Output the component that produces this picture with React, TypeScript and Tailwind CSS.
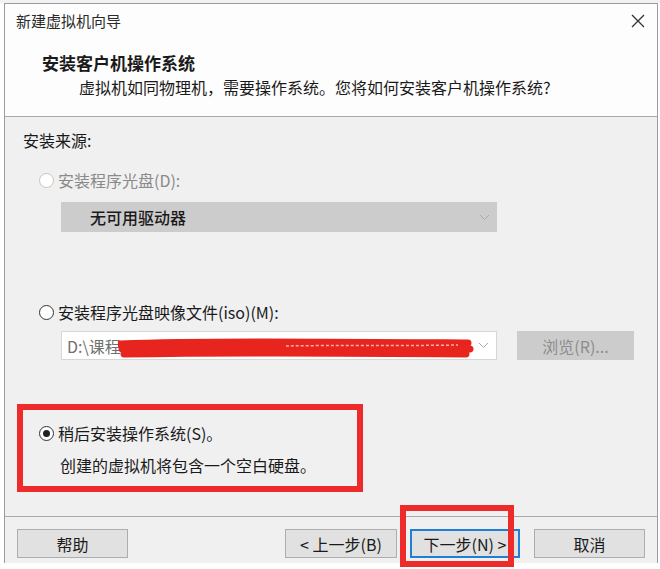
import React from 'react';

const FONT = "font-['Noto_Sans_CJK_SC','Microsoft_YaHei',sans-serif]";

function Radio({ checked, disabled }: { checked?: boolean; disabled?: boolean }) {
  return (
    <span
      className={`flex h-[15px] w-[15px] shrink-0 items-center justify-center rounded-full border bg-white ${
        disabled ? 'border-[#c4c4c4]' : 'border-[#333333]'
      }`}
    >
      {checked && <span className="h-[7px] w-[7px] rounded-full bg-[#222222]" />}
    </span>
  );
}

function Chevron() {
  return (
    <svg width="11" height="7" viewBox="0 0 11 7" className="shrink-0">
      <polyline points="1,1 5.5,5.5 10,1" fill="none" stroke="#a8a8a8" strokeWidth="1" />
    </svg>
  );
}

function Button({ label, focused, wide }: { label: string; focused?: boolean; wide?: boolean }) {
  return (
    <div
      className={`flex h-[29px] items-center justify-center bg-[#e1e1e1] text-[16px] leading-[20px] text-[#1a1a1a] ${
        focused
          ? 'w-[110px] border-2 border-[#1f7fd6]'
          : `${wide ? 'w-[112px]' : 'w-[111px]'} border border-[#adadad]`
      }`}
    >
      {label}
    </div>
  );
}

export default function App() {
  return (
    <div className={`relative flex h-[569px] w-[660px] flex-col overflow-hidden bg-white ${FONT}`}>
      {/* strip above the window */}
      <div className="h-[3px] bg-[#f2f2f2]" />

      {/* Window */}
      <div className="ml-[4px] flex h-[560px] w-[654px] flex-col border-l border-t border-r border-[#9c9c9c] bg-[#f0f0f1]">
        {/* Header */}
        <div className="h-[113px] border-b border-[#a9a9a9] bg-[#fdfdfd]">
          <div className="flex items-center justify-between pl-[11px] pr-[12px] pt-[7px]">
            <span className="text-[15px] leading-[20px] text-[#2a2a2a]">新建虚拟机向导</span>
            <svg width="14" height="14" viewBox="0 0 14 14">
              <path d="M1 1 L13 13 M13 1 L1 13" stroke="#333333" strokeWidth="1.3" />
            </svg>
          </div>
          <div className="mt-[20px] pl-[37px] text-[17px] font-bold leading-[24px] text-[#1a1a1a]">
            安装客户机操作系统
          </div>
          <div className="mt-[2px] pl-[74px] text-[16px] leading-[20px] text-[#1a1a1a]">
            虚拟机如同物理机，需要操作系统。您将如何安装客户机操作系统?
          </div>
        </div>

        {/* Body */}
        <div className="flex h-[399px] flex-col">
          <div className="pl-[18px] pt-[13px] text-[16px] leading-[20px] text-[#1a1a1a]">安装来源:</div>

          <div className="mt-[20px] flex items-center gap-[4px] pl-[34px] text-[16px] leading-[20px] text-[#8a8a8a]">
            <Radio disabled />
            <span>安装程序光盘(D):</span>
          </div>

          <div className="ml-[56px] mt-[12px] flex h-[30px] w-[436px] items-center justify-between bg-[#cccccd] pl-[29px] pr-[7px]">
            <span className="text-[16px] font-medium leading-[20px] text-[#1a1a1a]">无可用驱动器</span>
            <Chevron />
          </div>

          <div className="mt-[70px] flex items-center gap-[4px] pl-[34px] text-[16px] leading-[20px] text-[#1a1a1a]">
            <Radio />
            <span>安装程序光盘映像文件(iso)(M):</span>
          </div>

          <div className="ml-[56px] mt-[9px] flex items-center gap-[20px]">
            <div className="relative flex h-[29px] w-[436px] items-center justify-between border border-[#d6d6d6] bg-white pl-[5px] pr-[7px]">
              <span className="text-[16px] leading-[20px] text-[#707070]">D:\课程</span>
              <Chevron />
              {/* red scribble */}
              <svg
                className="absolute left-[56px] top-[6px]"
                width="356"
                height="22"
                viewBox="0 0 356 22"
              >
                <path
                  d="M2 6 C80 3 200 4 350 5 M4 11 C120 9 240 10 352 11 M6 16 C130 14 250 15 348 16"
                  fill="none"
                  stroke="#e8241f"
                  strokeWidth="7"
                  strokeLinecap="round"
                />
                <path
                  d="M168 8 C220 7 280 8 340 7"
                  fill="none"
                  stroke="#f6b3ad"
                  strokeWidth="1.5"
                  strokeDasharray="3 2"
                />
              </svg>
            </div>
            <div className="flex h-[29px] w-[117px] items-center justify-center bg-[#cccccd] text-[16px] leading-[20px] text-[#8c8c8c]">
              浏览(R)...
            </div>
          </div>

          {/* highlighted option */}
          <div className="ml-[12px] mt-[44px] flex h-[88px] w-[346px] flex-col border-[6px] border-[#ee2b2b] pl-[16px] pt-[13px]">
            <div className="flex items-center gap-[4px] text-[16px] leading-[20px] text-[#1a1a1a]">
              <Radio checked />
              <span>稍后安装操作系统(S)。</span>
            </div>
            <div className="mt-[12px] pl-[21px] text-[16px] leading-[20px] text-[#1a1a1a]">
              创建的虚拟机将包含一个空白硬盘。
            </div>
          </div>
        </div>

        {/* Footer */}
        <div className="flex flex-1 items-start border-t border-[#a9a9a9] pl-[12px] pt-[12px]">
          <Button label="帮助" />
          <div className="ml-[157px] flex gap-[13px]">
            <Button label="< 上一步(B)" wide />
            <Button label="下一步(N) >" focused />
          </div>
          <div className="ml-[14px]">
            <Button label="取消" />
          </div>
        </div>
      </div>

      {/* annotation box around the Next button */}
      <div className="absolute left-[400px] top-[505px] h-[62px] w-[114px] border-[6px] border-[#ee2b2b]" />
    </div>
  );
}
